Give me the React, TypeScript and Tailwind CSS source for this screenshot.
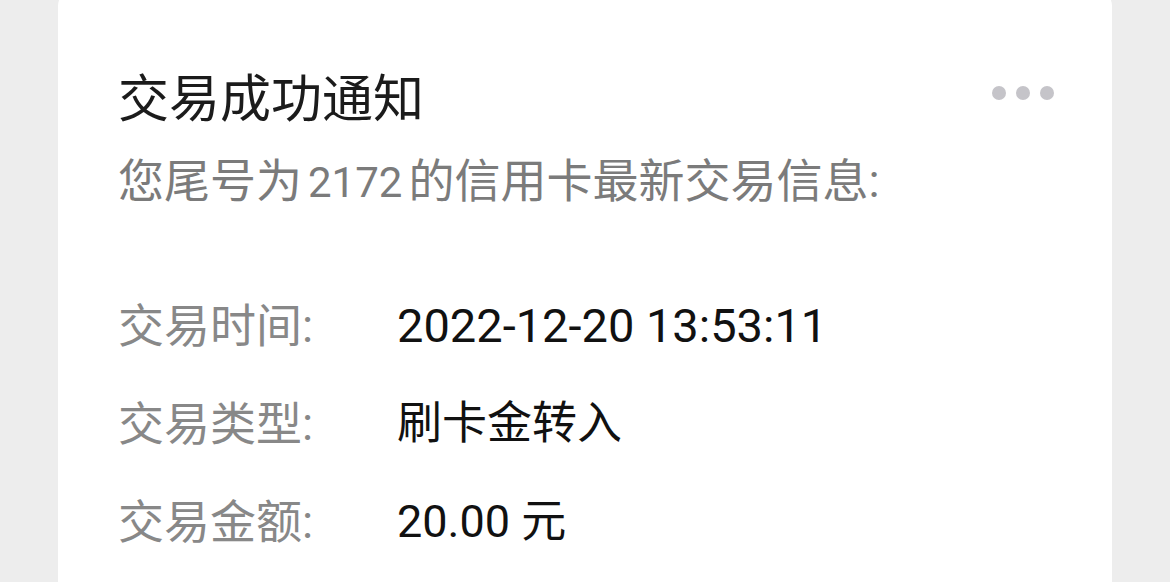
import React from 'react';

const rows = [
  { label: '交易时间:', value: '2022-12-20 13:53:11', size: 'text-[47px]' },
  { label: '交易类型:', value: '刷卡金转入', size: 'text-[45px]' },
  { label: '交易金额:', value: '20.00 元', size: 'text-[45px]' },
];

export default function App() {
  return (
    <div
      className="w-full h-screen overflow-hidden bg-[#ededed] px-[58px]"
      style={{ fontFamily: 'Roboto, "Noto Sans CJK SC", sans-serif' }}
    >
      <div className="-mt-[10px] h-[700px] bg-white rounded-[16px] pl-[60px] pr-[58px] pt-[80px]">
        {/* Header */}
        <div className="flex items-start justify-between">
          <h1 className="text-[51px] leading-[60px] font-normal text-[#1b1b1b]">交易成功通知</h1>
          <div className="flex gap-[10px] mt-[16px]">
            <span className="w-[14px] h-[14px] rounded-full bg-[#c5c4c9]" />
            <span className="w-[14px] h-[14px] rounded-full bg-[#c5c4c9]" />
            <span className="w-[14px] h-[14px] rounded-full bg-[#c5c4c9]" />
          </div>
        </div>
        <p className="mt-[21px] text-[46px] leading-[60px] text-[#7b7b7b] whitespace-nowrap">
          您尾号为<span className="text-[42px] ml-[6px] mr-[6px]">2172</span>的信用卡最新交易信息:
        </p>

        {/* Details */}
        <div className="mt-[64px] flex flex-col">
          {rows.map((r) => (
            <div key={r.label} className="h-[98px] flex items-center">
              <span className="w-[279px] shrink-0 text-[46px] text-[#888888]">{r.label}</span>
              <span className={`${r.size} text-[#111111]`}>{r.value}</span>
            </div>
          ))}
        </div>
      </div>
    </div>
  );
}
